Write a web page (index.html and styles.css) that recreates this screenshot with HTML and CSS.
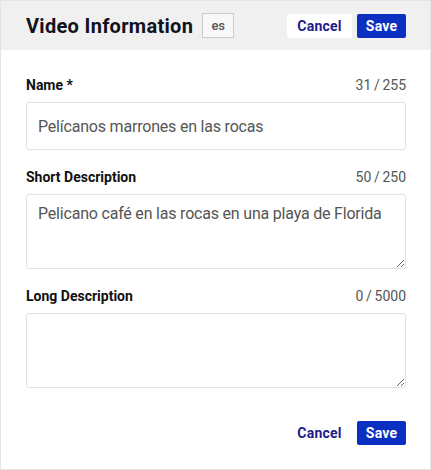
FILE: index.html
```html
<!DOCTYPE html>
<html lang="es">
<head>
<meta charset="utf-8">
<title>Video Information</title>
<link rel="stylesheet" href="styles.css">
</head>
<body>
<div class="panel">
  <header class="panel-header">
    <div class="title-group">
      <h1 class="title">Video Information</h1>
      <span class="lang-badge">es</span>
    </div>
    <div class="actions">
      <button class="btn btn-cancel btn-cancel-header">Cancel</button>
      <button class="btn btn-save">Save</button>
    </div>
  </header>
  <form class="panel-body">
    <div class="field">
      <div class="field-head">
        <label class="field-label" for="name">Name *</label>
        <span class="counter">31 / 255</span>
      </div>
      <input id="name" class="text-input" type="text" value="Pelícanos marrones en las rocas">
    </div>
    <div class="field">
      <div class="field-head">
        <label class="field-label" for="short">Short Description</label>
        <span class="counter">50 / 250</span>
      </div>
      <textarea id="short" class="text-area">Pelicano café en las rocas en una playa de Florida</textarea>
    </div>
    <div class="field">
      <div class="field-head">
        <label class="field-label" for="long">Long Description</label>
        <span class="counter">0 / 5000</span>
      </div>
      <textarea id="long" class="text-area"></textarea>
    </div>
    <div class="footer-actions">
      <button type="button" class="btn btn-cancel">Cancel</button>
      <button type="button" class="btn btn-save">Save</button>
    </div>
  </form>
</div>
</body>
</html>
```
FILE: styles.css
```css
* { box-sizing: border-box; }
html, body {
  margin: 0;
  padding: 0;
  background: #ffffff;
}
body {
  font-family: Roboto, "Liberation Sans", sans-serif;
  color: #111111;
}
.panel {
  width: 431px;
  height: 470px;
  border: 1px solid #e4e4e4;
  display: flex;
  flex-direction: column;
}
.panel-header {
  height: 49px;
  background: #f0f0f0;
  display: flex;
  align-items: center;
  justify-content: space-between;
  padding: 0 24px 0 25px;
  flex-shrink: 0;
}
.title-group {
  display: flex;
  align-items: center;
  gap: 9px;
}
.title {
  margin: 0;
  font-size: 20px;
  font-weight: 700;
  color: #10121c;
  letter-spacing: 0.3px;
}
.lang-badge {
  display: inline-flex;
  align-items: center;
  justify-content: center;
  width: 32px;
  height: 25px;
  border: 1px solid #cccccc;
  background: #f8f8f8;
  color: #555555;
  font-size: 13px;
  font-weight: 500;
}
.actions {
  display: flex;
  gap: 5px;
}
.btn {
  height: 24px;
  padding: 0 10px;
  border: none;
  border-radius: 2px;
  font-family: Roboto, "Liberation Sans", sans-serif;
  font-size: 14px;
  font-weight: 700;
  letter-spacing: 0.2px;
  cursor: pointer;
}
.btn-cancel {
  background: transparent;
  color: #1c1c8c;
  width: 65px;
}
.btn-cancel-header {
  background: #ffffff;
}
.btn-save {
  background: #0b2fc0;
  color: #ffffff;
  width: 49px;
  padding: 0;
}
.panel-body {
  display: flex;
  flex-direction: column;
  gap: 17px;
  padding: 25px 24px 0 25px;
  margin: 0;
}
.field {
  display: flex;
  flex-direction: column;
  gap: 7px;
}
.field-head {
  display: flex;
  justify-content: space-between;
  align-items: baseline;
  line-height: 20px;
  font-size: 14px;
}
.field-label {
  font-weight: 700;
  color: #111111;
}
.counter {
  color: #555555;
  word-spacing: -0.8px;
}
.text-input,
.text-area {
  width: 100%;
  border: 1px solid #e2e2e2;
  border-radius: 3px;
  font-family: Roboto, "Liberation Sans", sans-serif;
  font-size: 16px;
  letter-spacing: -0.2px;
  color: #555555;
  background: #ffffff;
  outline: none;
}
.text-input {
  height: 48px;
  padding: 0 11px;
}
.text-area {
  height: 75px;
  padding: 7px 11px;
  line-height: 24px;
  resize: vertical;
  display: block;
}
.footer-actions {
  display: flex;
  justify-content: flex-end;
  gap: 5px;
  margin-top: 16px;
}
```
